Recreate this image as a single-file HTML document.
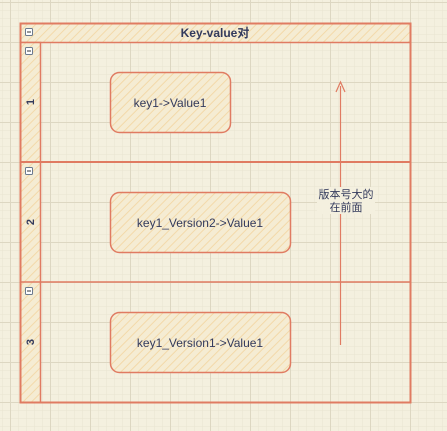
<!DOCTYPE html>
<html><head><style>
body{margin:0;width:447px;height:431px;overflow:hidden;background:#f4f0df;font-family:"Liberation Sans","Noto Sans CJK SC",sans-serif;}
</style></head><body>
<svg width="447" height="431" xmlns="http://www.w3.org/2000/svg" style="position:absolute;left:0;top:0">
<defs>
<pattern id="m" width="8" height="8" patternUnits="userSpaceOnUse" x="2" y="2"><path d="M0 0H8M0 0V8" stroke="#e9e4d0" stroke-width="1" fill="none"/></pattern>
<pattern id="M" width="40" height="40" patternUnits="userSpaceOnUse" x="10" y="2"><path d="M0 0.5H40M0.5 0V40" stroke="#ddd7c2" stroke-width="1" fill="none"/></pattern>
<pattern id="h" width="6" height="6" patternUnits="userSpaceOnUse" patternTransform="rotate(45)"><rect width="6" height="6" fill="#f5ecd3"/><line x1="0" y1="0" x2="0" y2="6" stroke="#f3d9a9" stroke-width="2"/></pattern>
</defs>
<rect width="447" height="431" fill="url(#m)"/>
<rect width="447" height="431" fill="url(#M)"/>
<g stroke="#e07b62" stroke-width="1.5">
<rect x="20.5" y="23.5" width="390" height="19" fill="url(#h)"/>
<rect x="20.5" y="42.5" width="20" height="360" fill="url(#h)"/>
<rect x="20.5" y="23.5" width="390" height="379" fill="none" stroke-width="2"/>
<line x1="20" y1="162" x2="410" y2="162" stroke-width="2"/>
<line x1="20" y1="282" x2="410" y2="282" stroke-width="1.5"/>
<rect x="110.5" y="72.5" width="120" height="60" rx="9" fill="url(#h)"/>
<rect x="110.5" y="192.5" width="180" height="60" rx="9" fill="url(#h)"/>
<rect x="110.5" y="312.5" width="180" height="60" rx="9" fill="url(#h)"/>
<line x1="340.5" y1="345" x2="340.5" y2="86" stroke-width="1.2"/>
<path d="M336 92 L340.5 82 L345 92" fill="none" stroke-width="1.2"/>
</g>
<rect x="317" y="187" width="58" height="27" fill="#f4f0df"/>
<g fill="#fff" stroke="#6b7a8f" stroke-width="1">
<rect x="25.5" y="28.5" width="7" height="7" rx="1"/><rect x="25.5" y="47.5" width="7" height="7" rx="1"/>
<rect x="25.5" y="167.5" width="7" height="7" rx="1"/><rect x="25.5" y="287.5" width="7" height="7" rx="1"/>
</g>
<g stroke="#333" stroke-width="1"><line x1="27" y1="32" x2="31" y2="32"/><line x1="27" y1="51" x2="31" y2="51"/><line x1="27" y1="171" x2="31" y2="171"/><line x1="27" y1="291" x2="31" y2="291"/></g>
<g fill="#333a5c" font-size="12" text-anchor="middle">
<text x="215" y="37" font-weight="bold" font-size="12">Key-value对</text>
<text x="170" y="107">key1-&gt;Value1</text>
<text x="200" y="227">key1_Version2-&gt;Value1</text>
<text x="200" y="347">key1_Version1-&gt;Value1</text>
<text x="346" y="198" font-size="11">版本号大的</text>
<text x="346" y="211" font-size="11">在前面</text>
<g font-weight="bold" font-size="11"><text transform="translate(30,102) rotate(-90)" dy="4">1</text>
<text transform="translate(30,222) rotate(-90)" dy="4">2</text>
<text transform="translate(30,342) rotate(-90)" dy="4">3</text></g>
</g>
</svg>
</body></html>
